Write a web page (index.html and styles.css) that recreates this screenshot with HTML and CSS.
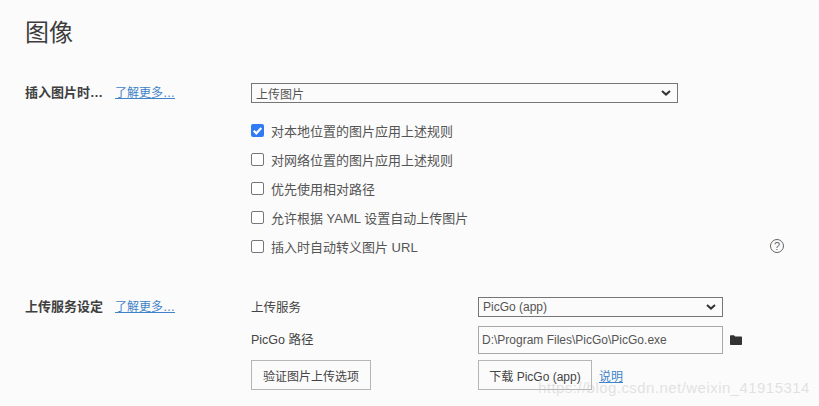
FILE: index.html
```html
<!DOCTYPE html>
<html lang="zh-CN">

<head>
    <meta charset="UTF-8">
    <title>图像</title>
    <link rel="stylesheet" href="styles.css">
</head>

<body>
    <div class="page">
        <h1>图像</h1>

        <section class="group group-insert">
            <div class="group-head">
                <span class="group-title">插入图片时…</span>
                <a class="more" href="#">了解更多…</a>
            </div>
            <div class="group-body">
                <div class="fake-select select-wide">
                    <span>上传图片</span>
                    <svg class="chevron" viewBox="0 0 10 6"><path d="M1 1l4 3.6L9 1" /></svg>
                </div>
                <ul class="checks">
                    <li><span class="box checked"><svg viewBox="0 0 12 12"><path d="M2.5 6.2l2.4 2.4 4.6-5" /></svg></span>对本地位置的图片应用上述规则</li>
                    <li><span class="box"></span>对网络位置的图片应用上述规则</li>
                    <li><span class="box"></span>优先使用相对路径</li>
                    <li><span class="box"></span>允许根据 YAML 设置自动上传图片</li>
                    <li class="check-help">
                        <span class="box"></span>插入时自动转义图片 URL
                        <span class="help">?</span>
                    </li>
                </ul>
            </div>
        </section>

        <section class="group">
            <div class="group-head">
                <span class="group-title">上传服务设定</span>
                <a class="more" href="#">了解更多…</a>
            </div>
            <div class="service">
                <span class="field-label">上传服务</span>
                <div class="fake-select">
                    <span>PicGo (app)</span>
                    <svg class="chevron" viewBox="0 0 10 6"><path d="M1 1l4 3.6L9 1" /></svg>
                </div>
                <span></span>

                <span class="field-label label-path">PicGo 路径</span>
                <div class="path-input">D:\Program Files\PicGo\PicGo.exe</div>
                <svg class="folder" viewBox="0 0 12 10"><path d="M0 1.2C0 .6.4.2 1 .2h3l1.2 1.3H11c.6 0 1 .4 1 1V9c0 .6-.4 1-1 1H1c-.6 0-1-.4-1-1z" /></svg>

                <div class="btn-cell"><button class="btn btn-verify">验证图片上传选项</button></div>
                <div class="btn-cell download">
                    <button class="btn btn-download">下载 PicGo (app)</button>
                    <a class="doc-link" href="#">说明</a>
                </div>
            </div>
        </section>
    </div>

    <span class="watermark">https://blog.csdn.net/weixin_41915314</span>
</body>

</html>
```

FILE: styles.css
```css
* {
    box-sizing: border-box;
}

html,
body {
    height: 100%;
}

body {
    margin: 0;
    overflow: hidden;
    position: relative;
    background-color: #fbfbfb;
    color: #444;
    font-family: "Liberation Sans", "Noto Sans CJK SC", sans-serif;
    font-size: 13px;
}

.page {
    padding: 15px 35px 0 25px;
}

h1 {
    margin: 0 0 33px;
    font-size: 24px;
    font-weight: 400;
    line-height: 35px;
    color: #3d3d3d;
}

.group {
    display: flex;
}

.group-insert {
    margin-bottom: 42px;
}

.group-head {
    width: 226px;
    flex: none;
    display: flex;
    align-items: baseline;
    gap: 12px;
    line-height: 20px;
}

.group-title {
    font-weight: 700;
    color: #3f3f3f;
}

.more,
.doc-link {
    color: #3f83c9;
    font-size: 12px;
    text-decoration: underline;
}

.group-body {
    flex: 1;
}

.fake-select {
    height: 20px;
    padding: 0 6px 0 4px;
    display: flex;
    align-items: center;
    justify-content: space-between;
    border: 1px solid #767676;
    color: #555;
    font-size: 12px;
}

.select-wide {
    width: 427px;
}

.chevron {
    width: 10px;
    height: 6px;
    fill: none;
    stroke: #333;
    stroke-width: 2;
}

.checks {
    list-style: none;
    margin: 18px 0 0;
    padding: 0;
    display: flex;
    flex-direction: column;
    gap: 11px;
}

.checks li {
    height: 18px;
    display: flex;
    align-items: center;
    gap: 7px;
    color: #555;
}

.box {
    width: 13px;
    height: 13px;
    flex: none;
    border: 1px solid #767676;
    border-radius: 2px;
    background: #fff;
}

.box.checked {
    border: none;
    background: #2f7bf5;
}

.box svg {
    display: block;
    fill: none;
    stroke: #fff;
    stroke-width: 2;
}

.help {
    width: 14px;
    height: 14px;
    margin-left: auto;
    display: flex;
    align-items: center;
    justify-content: center;
    border: 1px solid #666;
    border-radius: 50%;
    color: #666;
    font-size: 11px;
}

.service {
    flex: 1;
    display: grid;
    grid-template-columns: 227px 245px 1fr;
    grid-template-rows: 29px 34px 30px;
    align-items: start;
}

.field-label {
    font-size: 12.5px;
    line-height: 22px;
    color: #444;
}

.label-path {
    line-height: 28px;
}

.path-input {
    height: 28px;
    padding: 0 3px;
    display: flex;
    align-items: center;
    border: 1px solid #a9a9a9;
    color: #555;
    font-size: 12px;
}

.folder {
    width: 12px;
    height: 10px;
    margin: 9px 0 0 7px;
    fill: #333;
}

.btn-cell {
    height: 30px;
    display: flex;
    align-items: center;
}

.download {
    grid-column: 2 / 4;
}

.btn {
    height: 30px;
    padding: 0;
    background: transparent;
    border: 1px solid #b5b5b5;
    color: #444;
    font-family: inherit;
    font-size: 12px;
    white-space: nowrap;
}

.btn-verify {
    width: 120px;
}

.btn-download {
    width: 114px;
}

.doc-link {
    margin-left: 7px;
}

.watermark {
    position: absolute;
    left: 538px;
    top: 379px;
    color: rgba(200, 200, 200, 0.5);
    font-size: 15px;
    letter-spacing: 0.45px;
    white-space: nowrap;
}
```
